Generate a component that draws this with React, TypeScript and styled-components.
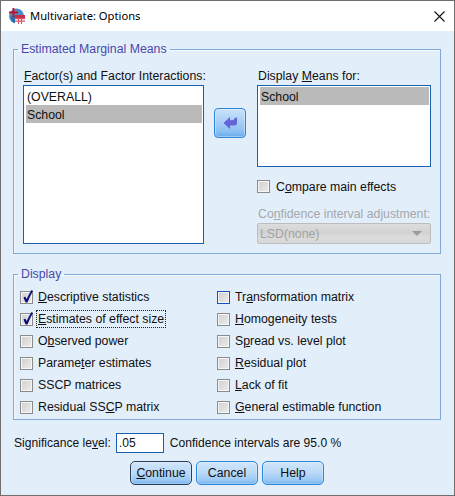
import * as React from "react";
import styled, { createGlobalStyle } from "styled-components";

const GlobalStyle = createGlobalStyle`
  html, body {
    margin: 0;
    padding: 0;
    background: #e2eefa;
  }
`;

const Window = styled.div`
  box-sizing: border-box;
  width: 455px;
  height: 496px;
  display: flex;
  flex-direction: column;
  border: 1px solid #6f6f6f;
  background: #e2eefa;
  color: #101010;
  font-family: "Liberation Sans", Arial, sans-serif;
  font-size: 12.3px;
  overflow: hidden;
`;

const TitleBar = styled.div`
  height: 30px;
  flex: none;
  display: flex;
  align-items: center;
  padding: 0 9px 0 7px;
  background: #fff;
`;

const TitleText = styled.span`
  flex: 1;
  margin: 0 0 2px 4px;
  font-family: "Noto Sans", sans-serif;
  font-size: 11.2px;
  color: #000;
`;

const Content = styled.div`
  display: flex;
  flex-direction: column;
  padding: 11px 13px 0 12px;
`;

const Group = styled.fieldset<{ $height: number }>`
  box-sizing: border-box;
  height: ${(p) => p.$height}px;
  margin: 0 0 13px;
  padding: 0 9px;
  min-width: 0;
  border: 1px solid #7fa9d6;
  box-shadow: inset 1px 1px 0 #f4f9fe;
`;

const Legend = styled.legend`
  margin-left: -5px;
  padding: 0 3px;
  height: 15px;
  line-height: 15px;
  color: #4848ac;
`;

const MeansGrid = styled.div`
  display: grid;
  grid-template-columns: 181px 31px 174px;
  column-gap: 11px;
  height: 187px;
  padding-top: 12px;
  box-sizing: border-box;
`;

const Column = styled.div`
  display: flex;
  flex-direction: column;
  min-height: 0;
`;

const FieldLabel = styled.div<{ $muted?: boolean }>`
  height: 16px;
  line-height: 15px;
  white-space: nowrap;
  padding-left: 1px;
  color: ${(p) => (p.$muted ? "#a5a8ab" : "#101010")};
`;

const Key = styled.span`
  text-decoration: underline;
  text-underline-offset: 1px;
`;

const ListBox = styled.div<{ $height?: number }>`
  box-sizing: border-box;
  flex: ${(p) => (p.$height ? "none" : "1")};
  height: ${(p) => (p.$height ? `${p.$height}px` : "auto")};
  padding: 1px 1px 1px 2px;
  background: #fff;
  border: 1px solid #1860ae;
`;

const ListItem = styled.div<{ $selected?: boolean }>`
  height: 18px;
  line-height: 20px;
  padding-left: 1px;
  background: ${(p) => (p.$selected ? "#bababa" : "transparent")};
`;

const MoveButton = styled.button`
  box-sizing: border-box;
  width: 32px;
  height: 30px;
  margin: 39px 0 0 -1px;
  padding: 0;
  display: flex;
  align-items: center;
  justify-content: center;
  border: 1px solid #2d86dc;
  border-radius: 4px;
  box-shadow: inset 0 0 0 1px rgba(255, 255, 255, 0.35);
  background: linear-gradient(#c9e2fa 0%, #a9d0f6 45%, #8cc0f3 80%, #66aaee 100%);
`;

const CompareRow = styled.div`
  margin-top: 13px;
  height: 13px;
`;

const CompareText = styled.span`
  margin-left: 1px;
`;

const AdjustLabel = styled(FieldLabel)`
  margin-top: 14px;
`;

const DisabledSelect = styled.div`
  box-sizing: border-box;
  height: 21px;
  display: flex;
  align-items: center;
  justify-content: space-between;
  padding: 0 8px 0 2px;
  color: #a3a3a3;
  border: 1px solid #bdbdbd;
  border-radius: 2px;
  background: linear-gradient(#dddddd 0%, #d2d2d2 45%, #dcdcdc 70%, #d8d8d8 100%);
`;

const SelectArrow = styled.span`
  width: 0;
  height: 0;
  border-left: 5px solid transparent;
  border-right: 5px solid transparent;
  border-top: 5px solid #9c9c9c;
`;

const DisplayGrid = styled.div`
  display: grid;
  grid-template-columns: 197px 1fr;
  grid-auto-rows: 22px;
  margin: 4px 0 0 -3px;
`;

const CheckRow = styled.label`
  display: flex;
  align-items: center;
  gap: 5px;
  height: 100%;
  white-space: nowrap;
`;

const CheckBox = styled.span<{ $focus?: boolean }>`
  box-sizing: border-box;
  width: 13px;
  height: 13px;
  flex: none;
  position: relative;
  border: 1px solid ${(p) => (p.$focus ? "#1450c8" : "#8b8b8b")};
  background: linear-gradient(135deg, #d0d0d0, #ececec);
  box-shadow: inset 0 0 0 1px #f6f6f6;
`;

const CheckMark = styled.svg`
  position: absolute;
  left: 0;
  top: -3px;
`;

const CheckText = styled.span<{ $focus?: boolean }>`
  padding: 1px;
  margin: 0 -1px;
  outline: ${(p) => (p.$focus ? "1px dotted #222" : "none")};
`;

const SignificanceRow = styled.div`
  display: flex;
  align-items: center;
  height: 21px;
  margin-top: -1px;
  padding-left: 1px;
  font-size: 12.1px;
`;

const SignificanceInput = styled.div`
  box-sizing: border-box;
  width: 48px;
  height: 20px;
  margin: 0 6px 0 5px;
  padding-left: 2px;
  line-height: 18px;
  background: #fff;
  border: 1px solid #1860ae;
`;

const ButtonRow = styled.div`
  display: flex;
  gap: 4px;
  margin: 8px 0 0 117px;
`;

const ActionButton = styled.button<{ $primary?: boolean }>`
  box-sizing: border-box;
  width: 62px;
  height: 24px;
  padding: 0;
  font: inherit;
  color: #101010;
  border: 1px solid ${(p) => (p.$primary ? "#2a3f58" : "#2d86dc")};
  border-radius: 5px;
  box-shadow: inset 0 0 0 1px rgba(255, 255, 255, 0.25);
  background: linear-gradient(#d2e6fa 0%, #b9d9f8 50%, #98c7f4 85%, #72b2ee 100%);
`;

const AppIcon = () => (
  <svg width="18" height="18" viewBox="0 0 18 18">
    <circle cx="8.5" cy="9" r="7.5" fill="#4a8fc4" />
    <path d="M3 13a7 7 0 0 0 8 3V9H3z" fill="#2f6ea6" />
    <rect x="7" y="8" width="10" height="9" fill="#fff" />
    <rect x="7" y="8" width="10" height="3" fill="#c8304a" />
    <path d="M7 11h10v1.2H7zM7 13.5h10v1.2H7zM10 11h1v6h-1zM13 11h1v6h-1z" fill="#d8506a" />
    <path d="M4.5 1h2v3.5H10v2H6.5V10h-2V6.5H1v-2h3.5z" fill="#c8102e" />
  </svg>
);

const CloseIcon = () => (
  <svg width="11" height="11" viewBox="0 0 11 11">
    <path d="M0.5 0.5l10 10M10.5 0.5l-10 10" stroke="#111" strokeWidth="1.1" fill="none" />
  </svg>
);

const BackArrow = () => (
  <svg width="15" height="14" viewBox="0 0 15 14">
    <path d="M0.5 7L7 1v3.2h3L12.5 1.5H14V7q0 2.5-3 2.5H7V13z" fill="#6464d8" />
  </svg>
);

const Tick = () => (
  <CheckMark width="13" height="15" viewBox="0 0 13 15">
    <path d="M2.5 8.5l2 5h2Q8.5 8 12 2L10.5 1Q8 5 5.6 10L4.2 7.5z" fill="#10107c" />
  </CheckMark>
);

type Option = {
  before: string;
  key: string;
  after: string;
  checked?: boolean;
  focusBox?: boolean;
  focusText?: boolean;
};

const options: Option[] = [
  { before: "", key: "D", after: "escriptive statistics", checked: true },
  { before: "Tr", key: "a", after: "nsformation matrix", focusBox: true },
  { before: "", key: "E", after: "stimates of effect size", checked: true, focusText: true },
  { before: "", key: "H", after: "omogeneity tests" },
  { before: "O", key: "b", after: "served power" },
  { before: "S", key: "p", after: "read vs. level plot" },
  { before: "Parame", key: "t", after: "er estimates" },
  { before: "", key: "R", after: "esidual plot" },
  { before: "SSCP matrices", key: "", after: "" },
  { before: "", key: "L", after: "ack of fit" },
  { before: "Residual SS", key: "C", after: "P matrix" },
  { before: "", key: "G", after: "eneral estimable function" },
];

const App = () => (
  <>
    <GlobalStyle />
    <Window>
      <TitleBar>
        <AppIcon />
        <TitleText>Multivariate: Options</TitleText>
        <CloseIcon />
      </TitleBar>
      <Content>
        <Group $height={212}>
          <Legend>Estimated Marginal Means</Legend>
          <MeansGrid>
            <Column>
              <FieldLabel>
                <Key>F</Key>actor(s) and Factor Interactions:
              </FieldLabel>
              <ListBox>
                <ListItem>(OVERALL)</ListItem>
                <ListItem $selected>School</ListItem>
              </ListBox>
            </Column>
            <MoveButton>
              <BackArrow />
            </MoveButton>
            <Column>
              <FieldLabel>
                Display <Key>M</Key>eans for:
              </FieldLabel>
              <ListBox $height={82}>
                <ListItem $selected>School</ListItem>
              </ListBox>
              <CompareRow>
                <CheckRow>
                  <CheckBox />
                  <CompareText>
                    C<Key>o</Key>mpare main effects
                  </CompareText>
                </CheckRow>
              </CompareRow>
              <AdjustLabel $muted>
                Co<Key>n</Key>fidence interval adjustment:
              </AdjustLabel>
              <DisabledSelect>
                LSD(none)
                <SelectArrow />
              </DisabledSelect>
            </Column>
          </MeansGrid>
        </Group>
        <Group $height={153}>
          <Legend>Display</Legend>
          <DisplayGrid>
            {options.map((o) => (
              <CheckRow key={o.before + o.key + o.after}>
                <CheckBox $focus={o.focusBox}>{o.checked && <Tick />}</CheckBox>
                <CheckText $focus={o.focusText}>
                  {o.before}
                  {o.key && <Key>{o.key}</Key>}
                  {o.after}
                </CheckText>
              </CheckRow>
            ))}
          </DisplayGrid>
        </Group>
        <SignificanceRow>
          Significance le<Key>v</Key>el:
          <SignificanceInput>.05</SignificanceInput>
          Confidence intervals are 95.0 %
        </SignificanceRow>
        <ButtonRow>
          <ActionButton $primary>
            <Key>C</Key>ontinue
          </ActionButton>
          <ActionButton>Cancel</ActionButton>
          <ActionButton>Help</ActionButton>
        </ButtonRow>
      </Content>
    </Window>
  </>
);

export default App;
